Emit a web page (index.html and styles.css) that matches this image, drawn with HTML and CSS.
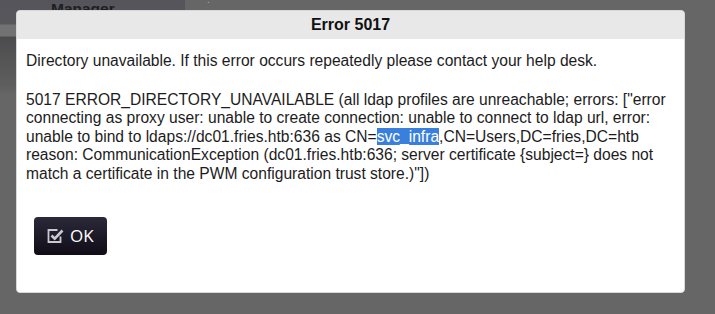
FILE: index.html
```html
<!DOCTYPE html>
<html>
<head>
<meta charset="utf-8">
<link rel="stylesheet" href="styles.css">
</head>
<body>
<div class="page">
  <aside class="sidebar">
    <div class="brand">Manager</div>
  </aside>
  <main class="main"><span class="dot">.</span></main>
</div>
<div class="dialog">
  <div class="title">Error 5017</div>
  <div class="body">
    <p class="msg">Directory unavailable. If this error occurs repeatedly please contact your help desk.</p>
    <p class="msg detail">5017 ERROR_DIRECTORY_UNAVAILABLE (all ldap profiles are unreachable; errors: ["error connecting as proxy user: unable to create connection: unable to connect to ldap url, error: unable to bind to ldaps://dc01.fries.htb:636 as CN=<span class="sel">svc_infra</span>,CN=Users,DC=fries,DC=htb reason: CommunicationException (dc01.fries.htb:636; server certificate {subject=} does not match a certificate in the PWM configuration trust store.)"])</p>
    <button class="ok">
      <svg class="ico" width="17" height="17" viewBox="0 0 17 17">
        <path d="M13.5 9.5V15H1.5V3h9" fill="none" stroke="#c9c9cf" stroke-width="1.8"/>
        <path d="M4.5 8.5l3.2 3.2L15.5 3.5" fill="none" stroke="#c9c9cf" stroke-width="2.6"/>
      </svg>
      <span>OK</span>
    </button>
  </div>
</div>
</body>
</html>
```

FILE: styles.css
```css
html, body {
  margin: 0;
  padding: 0;
  background: #666666;
  height: 100%;
  overflow: hidden;
}
.page {
  display: flex;
  height: 314px;
}
.sidebar {
  width: 185px;
  background: linear-gradient(#55545a 0px, #58575c 24px, #727272 25px, #727272 36px, #4c4c4e 37px, #5e5e5e 85px, #666 95px);
}
.brand {
  font-family: "Liberation Sans", Arial, sans-serif;
  font-weight: bold;
  font-size: 15.5px;
  color: #1e1e22;
  padding-left: 51px;
  margin-top: 0;
  line-height: 18px;
}
.main {
  flex: 1;
  background: #666666;
  position: relative;
}
.dot {
  position: absolute;
  left: 22px;
  top: -6px;
  color: #aaa;
  font-family: "Liberation Sans", sans-serif;
  font-size: 10px;
}
.dialog {
  position: absolute;
  left: 16px;
  top: 10px;
  width: 667px;
  height: 281px;
  background: #fff;
  border: 1px solid #d8d8d8;
  border-radius: 4px;
  overflow: hidden;
  font-family: "Liberation Sans", Arial, sans-serif;
}
.title {
  height: 28px;
  background: #e8e8e8;
  text-align: center;
  font-weight: bold;
  font-size: 16px;
  line-height: 28px;
  color: #111;
}
.body {
  padding: 13px 10px 0 9px;
  color: #1c1c1c;
  font-size: 15.6px;
}
.msg {
  margin: 0;
  line-height: 18.6px;
}
.detail {
  margin-top: 20px;
}
.sel {
  background: #3a7fdc;
  color: #fff;
}
.ok {
  margin-top: 33px;
  margin-left: 8px;
  width: 73px;
  height: 38px;
  border: none;
  border-radius: 4px;
  background: linear-gradient(#2b2839, #100d18);
  color: #fff;
  display: flex;
  align-items: center;
  padding: 0 0 0 13px;
  gap: 6px;
  font-family: "Open Sans", "DejaVu Sans", sans-serif;
  font-size: 17px;
}
.ico {
  display: block;
}
```
